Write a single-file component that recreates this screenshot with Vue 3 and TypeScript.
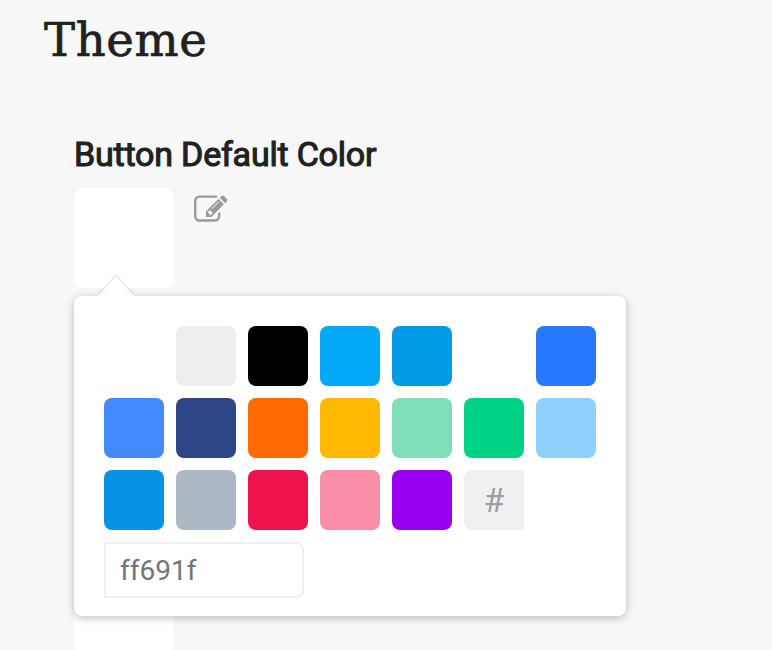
<script setup lang="ts">
import { ref } from 'vue'

const palette: string[] = [
  '#ffffff', '#eeeeee', '#000000', '#03a9f6', '#039be6', '#ffffff', '#2979ff',
  '#448aff', '#2e4688', '#ff6a00', '#ffb900', '#7fddb7', '#00d285', '#8fd1fd',
  '#0793e4', '#abb7c3', '#ee134c', '#f88ea8', '#9900f0',
]
const hex = ref('')
const selected = ref('#ffffff')
</script>

<template>
  <main class="page">
    <h1 class="title">Theme</h1>
    <section class="field">
      <h2 class="label">Button Default Color</h2>
      <div class="row">
        <div class="preview" :style="{ background: selected }"></div>
        <svg class="edit" viewBox="0 0 1792 1792" aria-hidden="true">
          <path d="M888 1184l116-116-152-152-116 116v56h96v96h56zm440-720q-16-16-33 1l-350 350q-17 17-1 33t33-1l350-350q17-17 1-33zm80 594v190q0 119-84.5 203.5t-203.5 84.5h-832q-119 0-203.5-84.5t-84.5-203.5v-832q0-119 84.5-203.5t203.5-84.5h832q63 0 117 25 15 7 18 23 3 17-9 29l-49 49q-14 14-32 8-23-6-45-6h-832q-66 0-113 47t-47 113v832q0 66 47 113t113 47h832q66 0 113-47t47-113v-126q0-13 9-22l64-64q15-15 35-7t20 29zm-96-738l288 288-672 672h-288v-288zm444 132l-92 92-288-288 92-92q28-28 68-28t68 28l152 152q28 28 28 68t-28 68z" />
        </svg>
      </div>
      <div class="popover">
        <div class="swatches">
          <button
            v-for="(color, i) in palette"
            :key="i"
            class="swatch"
            type="button"
            :style="{ background: color }"
            @click="selected = color"
          ></button>
          <div class="hash">#</div>
        </div>
        <input v-model="hex" class="hex" type="text" placeholder="ff691f" />
      </div>
    </section>
    <section class="field next">
      <div class="preview"></div>
    </section>
  </main>
</template>

<style>
body {
  background: #f7f7f7;
}
</style>

<style scoped>
.page {
  box-sizing: border-box;
  height: 650px;
  padding: 8px 44px 0;
  overflow: hidden;
  background: #f7f7f7;
  color: #212121;
  font-family: Roboto, sans-serif;
}
.title {
  margin: 0;
  height: 64px;
  line-height: 64px;
  font-family: "DejaVu Serif", serif;
  font-size: 46.5px;
  font-weight: 400;
  letter-spacing: 0.7px;
  -webkit-text-stroke: 0.7px #212121;
}
.field {
  position: relative;
  margin-left: 30px;
  padding-top: 61px;
}
.label {
  margin: 0;
  height: 55px;
  line-height: 42px;
  font-size: 34px;
  font-weight: 400;
  letter-spacing: -0.2px;
  -webkit-text-stroke: 1.1px #212121;
  white-space: nowrap;
}
.row {
  display: flex;
  gap: 20px;
}
.preview {
  width: 100px;
  height: 100px;
  border-radius: 10px;
  background: #fff;
}
.edit {
  width: 33.5px;
  height: 33.5px;
  margin-top: 5px;
  fill: #999;
}
.popover {
  position: absolute;
  z-index: 1;
  top: 224px;
  left: 0;
  box-sizing: border-box;
  width: 552px;
  height: 320px;
  padding: 30px 18px 18px 30px;
  border-radius: 8px;
  background: #fff;
  box-shadow: 0 2px 8px rgba(0, 0, 0, 0.25);
}
.popover::before,
.popover::after {
  content: "";
  position: absolute;
  left: 24px;
  border-style: solid;
  border-width: 0 18px 20px;
}
.popover::before {
  top: -22px;
  border-color: transparent transparent rgba(0, 0, 0, 0.1);
}
.popover::after {
  top: -20px;
  border-color: transparent transparent #fff;
}
.swatches {
  display: grid;
  grid-template-columns: repeat(7, 60px);
  gap: 12px;
}
.swatch {
  width: 60px;
  height: 60px;
  padding: 0;
  border: 0;
  border-radius: 8px;
  cursor: pointer;
}
.hash {
  display: flex;
  align-items: center;
  justify-content: center;
  height: 60px;
  border-radius: 8px 0 0 8px;
  background: #f0f0f0;
  color: #98a1a4;
  font-size: 34px;
}
.hex {
  display: block;
  box-sizing: border-box;
  width: 200px;
  height: 56px;
  margin-top: 12px;
  padding: 0 16px;
  border: 0;
  border-radius: 0 8px 8px 0;
  outline: 0;
  background: #fff;
  box-shadow: inset 0 0 0 2px #f0f0f0;
  color: #666;
  font-family: Roboto, sans-serif;
  font-size: 28px;
}
.hex::placeholder {
  color: #757575;
}
.next {
  padding-top: 300px;
}
</style>
